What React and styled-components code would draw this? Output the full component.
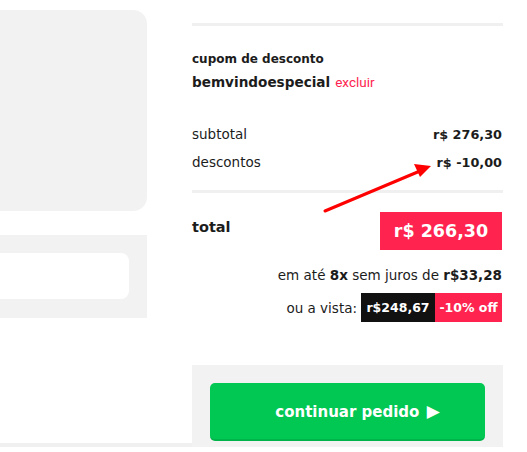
import React from 'react';
import styled, { createGlobalStyle } from 'styled-components';

const GlobalStyle = createGlobalStyle`
  html, body {
    margin: 0;
    padding: 0;
    background: #ffffff;
  }
  body {
    font-family: "DejaVu Sans", "Liberation Sans", sans-serif;
    color: #1c1c1c;
  }
`;

const Page = styled.div`
  display: flex;
  width: 527px;
  height: 452px;
  overflow: hidden;
`;

const LeftColumn = styled.div`
  display: flex;
  flex-direction: column;
  width: 192px;
  flex-shrink: 0;
  padding-top: 10px;
`;

const ProductCard = styled.div`
  width: 147px;
  height: 201px;
  background: #f2f2f2;
  border-radius: 0 14px 14px 0;
`;

const ShippingPanel = styled.div`
  width: 147px;
  height: 83px;
  box-sizing: border-box;
  margin-top: 24px;
  padding: 18px 18px 19px 0;
  background: #f2f2f2;
`;

const ShippingInput = styled.div`
  height: 46px;
  background: #ffffff;
  border-radius: 0 8px 8px 0;
`;

const BottomRule = styled.div`
  margin-top: auto;
  margin-bottom: 5px;
  height: 4px;
  background: #f0f0f0;
`;

const Summary = styled.div`
  position: relative;
  display: flex;
  flex-direction: column;
  width: 311px;
  flex-shrink: 0;
  padding-top: 23px;
`;

const Divider = styled.div`
  height: 3px;
  background: #f0f0f0;
  margin-top: ${(p) => p.$top || 0}px;
`;

const CouponLabel = styled.div`
  margin-top: 24px;
  font-size: 12px;
  font-weight: bold;
  line-height: 18px;
`;

const CouponName = styled.div`
  margin-top: 2px;
  font-size: 13.6px;
  font-weight: bold;
  line-height: 24px;
`;

const RemoveLink = styled.span`
  margin-left: 5px;
  font-family: Roboto, "Liberation Sans", sans-serif;
  font-weight: normal;
  font-size: 13.5px;
  color: #ff2450;
`;

const Rows = styled.div`
  margin-top: 26px;
`;

const Row = styled.div`
  display: flex;
  justify-content: space-between;
  align-items: center;
  height: 28px;
  font-size: 13.5px;
`;

const RowValue = styled.span`
  font-weight: bold;
  font-size: 12.8px;
  padding-right: 1px;
`;

const TotalRow = styled.div`
  display: flex;
  justify-content: space-between;
  align-items: flex-start;
  margin-top: 19px;
`;

const TotalLabel = styled.span`
  font-size: 14.5px;
  font-weight: bold;
  line-height: 30px;
`;

const TotalBadge = styled.div`
  width: 122px;
  height: 38px;
  margin-right: 1px;
  display: flex;
  align-items: center;
  justify-content: center;
  background: #ff2350;
  color: #ffffff;
  font-size: 17.5px;
  font-weight: bold;
`;

const Installments = styled.div`
  margin-top: 14px;
  line-height: 22px;
  font-size: 13.5px;
  text-align: right;
  padding-right: 1px;

  b {
    font-weight: bold;
  }
`;

const CashRow = styled.div`
  display: flex;
  justify-content: flex-end;
  align-items: center;
  margin-top: 7px;
  margin-right: 1px;
  font-size: 13.5px;
`;

const CashLabel = styled.span`
  margin-right: 4px;
`;

const Tag = styled.span`
  display: flex;
  align-items: center;
  justify-content: center;
  height: 29px;
  width: ${(p) => p.$width}px;
  background: ${(p) => p.$bg};
  color: #ffffff;
  font-weight: bold;
  font-size: 12.5px;
`;

const CheckoutPanel = styled.div`
  margin-top: 43px;
  height: 82px;
  box-sizing: border-box;
  padding: 18px 18px 6px 18px;
  background: #f2f2f2;
`;

const CheckoutButton = styled.button`
  width: 100%;
  height: 58px;
  padding: 0 0 0 20px;
  border: none;
  border-bottom: 2px solid #00b34a;
  border-radius: 5px;
  background: #00c853;
  color: #ffffff;
  font-family: "DejaVu Sans", sans-serif;
  font-weight: bold;
  font-size: 15px;
  cursor: pointer;
`;

const PlayGlyph = styled.span`
  font-size: 17px;
  margin-left: 2px;
`;

const Arrow = styled.svg`
  position: absolute;
  left: 0;
  top: 0;
  pointer-events: none;
`;

export default function App() {
  return (
    <>
      <GlobalStyle />
      <Page>
        <LeftColumn>
          <ProductCard />
          <ShippingPanel>
            <ShippingInput />
          </ShippingPanel>
          <BottomRule />
        </LeftColumn>
        <Summary>
          <Divider />
          <CouponLabel>cupom de desconto</CouponLabel>
          <CouponName>
            bemvindoespecial<RemoveLink>excluir</RemoveLink>
          </CouponName>
          <Rows>
            <Row>
              <span>subtotal</span>
              <RowValue>r$ 276,30</RowValue>
            </Row>
            <Row>
              <span>descontos</span>
              <RowValue>r$ -10,00</RowValue>
            </Row>
          </Rows>
          <Divider $top={14} />
          <TotalRow>
            <TotalLabel>total</TotalLabel>
            <TotalBadge>r$ 266,30</TotalBadge>
          </TotalRow>
          <Installments>
            em até <b>8x</b> sem juros de <b>r$33,28</b>
          </Installments>
          <CashRow>
            <CashLabel>ou a vista:</CashLabel>
            <Tag $bg="#111111" $width={74}>r$248,67</Tag>
            <Tag $bg="#ff2350" $width={67}>-10% off</Tag>
          </CashRow>
          <CheckoutPanel>
            <CheckoutButton>
              continuar pedido <PlayGlyph>▶</PlayGlyph>
            </CheckoutButton>
          </CheckoutPanel>
          <Arrow width="311" height="452" viewBox="0 0 311 452">
            <line x1="133" y1="211" x2="228" y2="171" stroke="#ff0000" strokeWidth="3" strokeLinecap="round" />
            <polygon points="239,166 222,164 228,177" fill="#ff0000" />
          </Arrow>
        </Summary>
      </Page>
    </>
  );
}
